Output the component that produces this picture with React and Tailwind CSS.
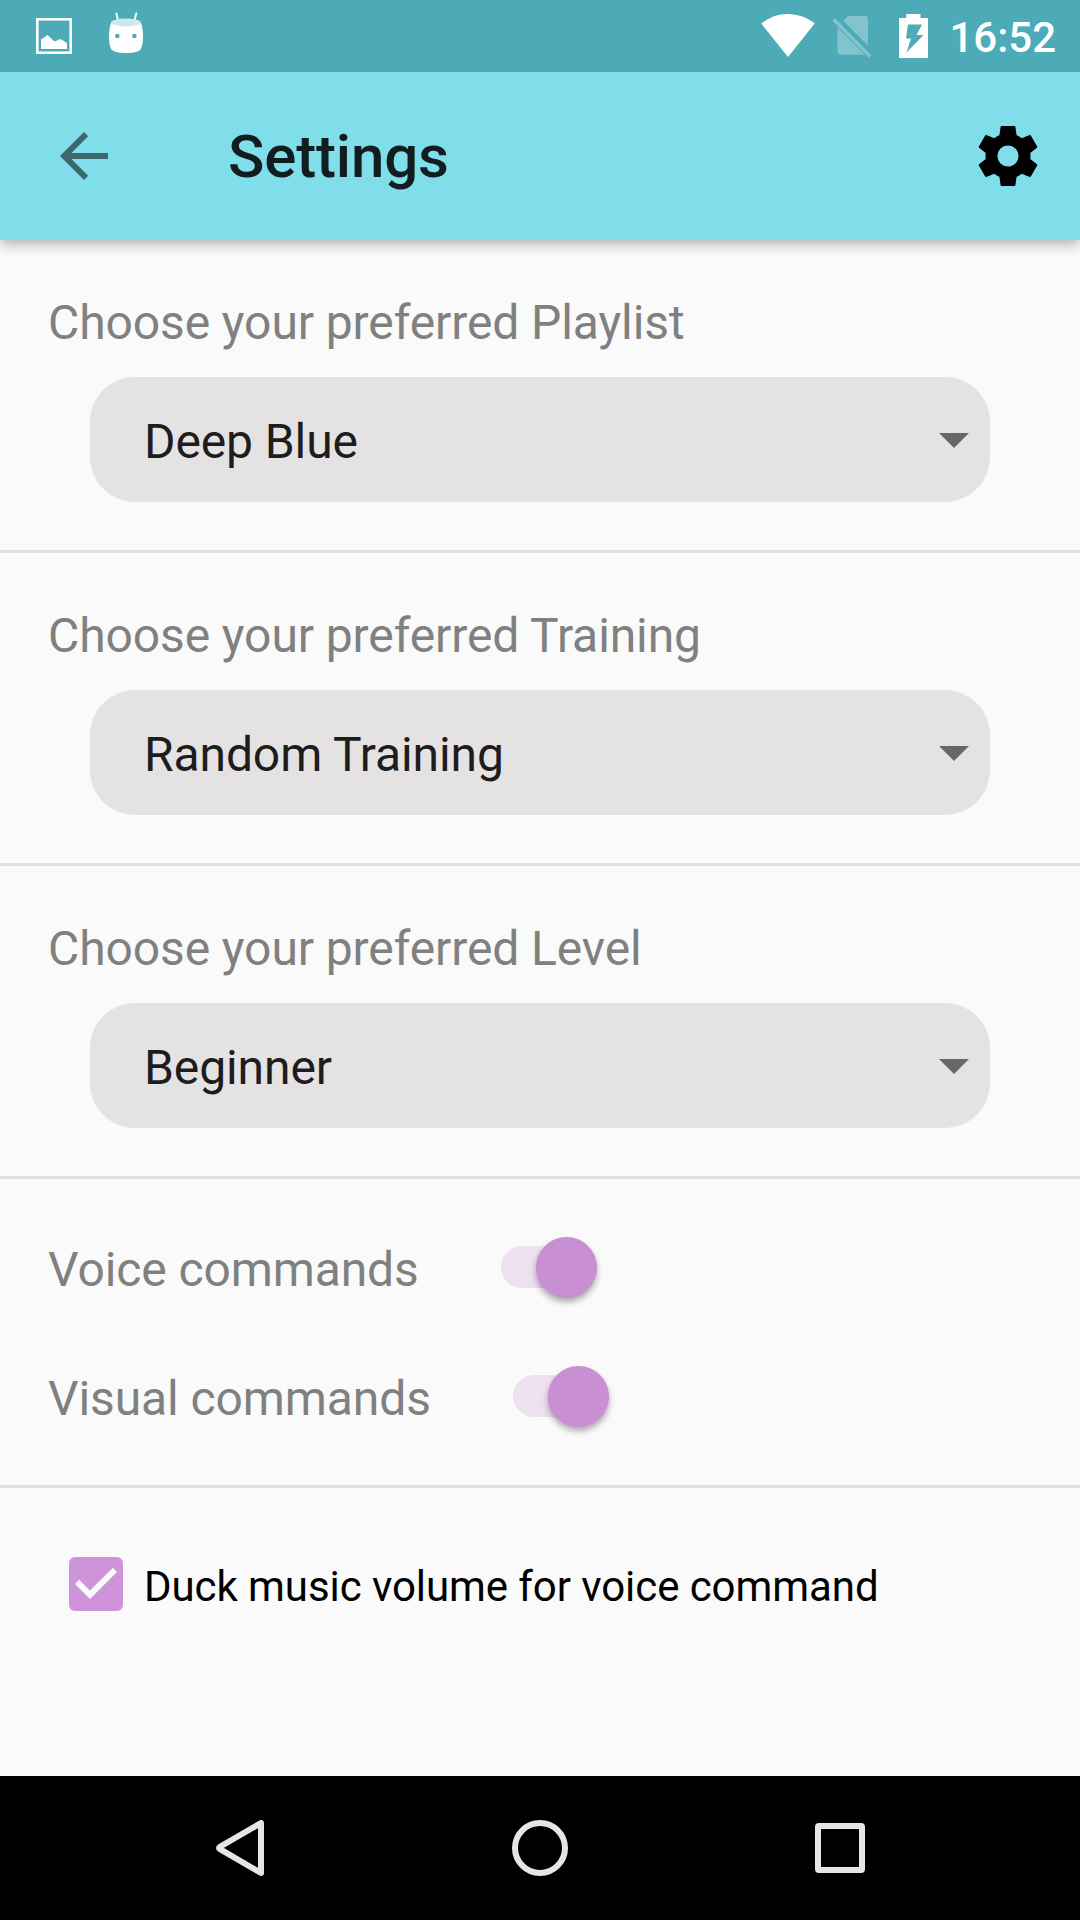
import React from "react";

function StatusBar() {
  return (
    <div className="relative z-10 flex h-[72px] items-start justify-between bg-[#4dabb8]">
      <div className="flex">
        <svg className="ml-9 mt-[18px]" width="36" height="36" viewBox="0 0 36 36">
          <rect x="1.3" y="1.3" width="33.4" height="33.4" fill="none" stroke="#fff" strokeWidth="2.6" />
          <path d="M5 31V21.500L11.500 17l7 6.500L24.500 21l6.500 4v6z" fill="#fff" />
        </svg>
        <svg className="ml-9 mt-3" width="36" height="42" viewBox="0 0 36 42">
          <path d="M8.300 1.500l2 8M28.300 1.500l-2.200 8" stroke="#fff" strokeWidth="2" strokeLinecap="round" />
          <path d="M3 11C1.500 15 1 20 1 25c0 6 1 10 2.500 12.500C6 40.300 12 41 18 41s12-.7 14.500-3.500C34 35 35 31 35 25c0-5-.5-10-2-14z" fill="#fff" />
          <ellipse cx="18" cy="10.500" rx="15" ry="4" fill="#cfe8ec" />
          <circle cx="9.300" cy="24" r="2.300" fill="#4dabb8" />
          <circle cx="26.400" cy="24" r="2.300" fill="#4dabb8" />
        </svg>
      </div>
      <div className="flex">
        <svg className="mt-[14px]" width="54" height="43" viewBox="0 0 54 43">
          <path d="M27 43L.3 9.500C8 3.500 17 0 27 0s19 3.500 26.700 9.500z" fill="#fff" />
        </svg>
        <svg className="ml-[17px] mt-4" width="40" height="43" viewBox="0 0 40 43">
          <path d="M11.500 5L16 0h17c2 0 3 1.200 3 3v26.700zM5.500 11.200L33 38.800h-24.500c-2 0-3-1.200-3-3z" fill="#82c4cd" />
          <path d="M1.700 3.500L38.200 40.500" stroke="#82c4cd" strokeWidth="3.600" />
        </svg>
        <svg className="ml-[27px] mt-[14px]" width="29" height="44" viewBox="0 0 29 44">
          <path d="M7.300 0h14.200v4H29v40H0V4h7.300z" fill="#fff" />
          <path d="M9 10.500h14L17.500 21h7L7.500 38.500L12 24.500H7z" fill="#4dabb8" />
        </svg>
        <span className="ml-[21px] mr-6 mt-[13px] text-[42px] font-medium leading-[50px] text-white">16:52</span>
      </div>
    </div>
  );
}

function AppBar() {
  return (
    <header className="relative flex h-[168px] items-center bg-[#80deeb] pl-12 pr-9 shadow-[0_4px_12px_rgba(0,0,0,0.3)]">
      <svg width="72" height="72" viewBox="0 0 24 24" fill="#3c686e">
        <path d="M20 11H7.830l5.590-5.590L12 4l-8 8 8 8 1.410-1.410L7.830 13H20v-2z" />
      </svg>
      <h1 className="ml-[108px] grow pt-[2px] text-[60px] font-medium leading-[70px] tracking-[-0.15px] text-[#111d1f]">Settings</h1>
      <svg width="72" height="72" viewBox="0 0 24 24">
        <path d="M19.430 12.980c.04-.32.07-.64.07-.98s-.03-.66-.07-.98l2.110-1.650c.19-.15.24-.42.12-.64l-2-3.460c-.12-.22-.39-.3-.61-.22l-2.490 1c-.52-.4-1.080-.73-1.690-.98l-.38-2.650C14.460 2.180 14.250 2 14 2h-4c-.25 0-.46.18-.49.42l-.38 2.650c-.61.25-1.170.59-1.690.98l-2.490-1c-.23-.09-.49 0-.61.22l-2 3.460c-.13.22-.07.49.12.64l2.110 1.650c-.04.32-.07.65-.07.98s.03.66.07.98l-2.110 1.650c-.19.15-.24.42-.12.64l2 3.460c.12.22.39.3.61.22l2.490-1c.52.4 1.080.73 1.690.98l.38 2.650c.03.24.24.42.49.42h4c.25 0 .46-.18.49-.42l.38-2.650c.61-.25 1.170-.59 1.690-.98l2.490 1c.23.09.49 0 .61-.22l2-3.460c.12-.22.07-.49-.12-.64l-2.110-1.650zM12 15.500c-1.930 0-3.500-1.570-3.500-3.500s1.570-3.500 3.500-3.500 3.500 1.570 3.500 3.500-1.570 3.500-3.500 3.500z" />
      </svg>
    </header>
  );
}

function SelectSection({ label, value }) {
  return (
    <section className="h-[313px] border-b-[3px] border-[#e1e1e1] pt-[55px]">
      <div className="pl-12 text-5xl leading-[56px] tracking-[-0.1px] text-[#808080]">{label}</div>
      <button className="mx-[90px] mt-[26px] flex h-[125px] w-[900px] items-center justify-between rounded-[45px] bg-[#e4e2e3] pl-[54px] pr-[21px]">
        <span className="pt-[5px] text-5xl leading-[56px] tracking-[-0.1px] text-[#1d1d1d]">{value}</span>
        <svg className="mt-[2px]" width="30" height="15" viewBox="0 0 30 15" fill="#676767">
          <path d="M0 0h30L15 15z" />
        </svg>
      </button>
    </section>
  );
}

function SwitchRow({ label }) {
  return (
    <div className="flex h-[60px] items-center pl-12">
      <span className="pt-[6px] text-5xl leading-[56px] tracking-[-0.1px] text-[#808080]">{label}</span>
      <div className="ml-[82.5px] flex h-[42px] w-24 items-center justify-end rounded-full bg-[#eedff1]">
        <div className="mt-px h-[61px] w-[61px] shrink-0 rounded-full bg-[#c88fd3] shadow-[0_4px_6px_rgba(0,0,0,0.32)]" />
      </div>
    </div>
  );
}

function NavBar() {
  return (
    <nav className="flex h-36 items-center justify-center gap-[246px] bg-black">
      <svg width="56" height="56" viewBox="0 0 56 56" fill="none" stroke="#e6e6e6" strokeWidth="6" strokeLinejoin="round">
        <path d="M51 3v50L10 29.200Q8 28 10 26.800z" />
      </svg>
      <svg width="56" height="56" viewBox="0 0 56 56" fill="none" stroke="#e6e6e6" strokeWidth="6">
        <circle cx="28" cy="28" r="25" />
      </svg>
      <svg width="56" height="56" viewBox="0 0 56 56" fill="none" stroke="#e6e6e6" strokeWidth="6">
        <rect x="4" y="6" width="44" height="44" rx="1" />
      </svg>
    </nav>
  );
}

export default function App() {
  return (
    <div className="flex h-[1920px] w-[1080px] flex-col overflow-hidden bg-[#fafafa] font-[Roboto,sans-serif]">
      <StatusBar />
      <AppBar />
      <main className="grow">
        <SelectSection label="Choose your preferred Playlist" value="Deep Blue" />
        <SelectSection label="Choose your preferred Training" value="Random Training" />
        <SelectSection label="Choose your preferred Level" value="Beginner" />
        <section className="flex h-[309px] flex-col gap-[69px] border-b-[3px] border-[#e1e1e1] pt-[58px]">
          <SwitchRow label="Voice commands" />
          <SwitchRow label="Visual commands" />
        </section>
        <label className="flex items-center pl-[60px] pt-[60px]">
          <svg width="72" height="72" viewBox="0 0 24 24">
            <rect x="3" y="3" width="18" height="18" rx="2" fill="#ce93d8" />
            <path d="M10 17l-5-5 1.410-1.410L10 14.170l7.590-7.590L19 8l-9 9z" fill="#fafafa" />
          </svg>
          <span className="ml-3 pt-[5px] text-[42px] leading-[50px] tracking-[-0.07px] text-black">Duck music volume for voice command</span>
        </label>
      </main>
      <NavBar />
    </div>
  );
}
